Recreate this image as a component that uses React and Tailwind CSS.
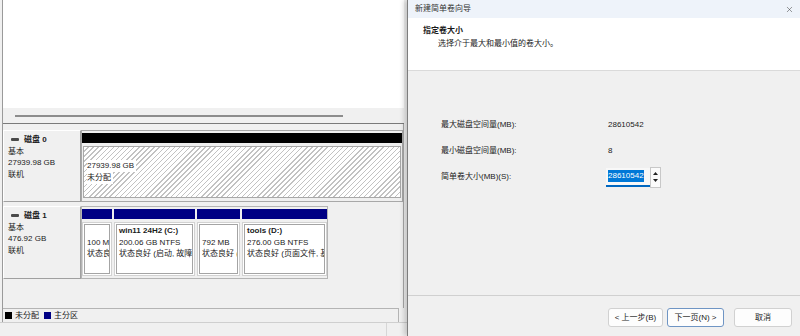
import React from "react";
import { X } from "lucide-react";

// disk label on the left of each row
function DiskLabel({ name, size }) {
  return (
    <div className="w-[78px] flex-none border border-white border-r-[#a0a0a0] border-b-[#a0a0a0] pl-[4px] pt-[3px]">
      <div className="flex items-center">
        <span className="ml-[3px] mr-[5px] w-[8px] h-[3px] bg-[#4a4a4a] rounded-[1px]" />
        <span className="font-bold">{name}</span>
      </div>
      <div>基本</div>
      <div>{size}</div>
      <div>联机</div>
    </div>
  );
}

function Partition({ w, title, size, status }) {
  return (
    <div className={`${w} flex-none flex flex-col gap-[3px]`}>
      <div className="h-[10px] bg-[#000084]" />
      <div className="flex-1 border border-[#d2d2d2] bg-white p-[1px]">
        <div className="h-full border border-[#a4a4a4] pl-[2px] overflow-hidden whitespace-nowrap">
          <div className="font-bold">{title || "\u00a0"}</div>
          <div>{size}</div>
          <div>{status}</div>
        </div>
      </div>
    </div>
  );
}

const Spin = () => (
  <div className="w-[11px] h-[21px] border border-[#c8c8c8] bg-[#fbfbfb] flex flex-col items-center justify-around py-[2px]">
    <svg width="5" height="3" viewBox="0 0 5 3"><polygon points="2.5,0 5,3 0,3" fill="#222" /></svg>
    <svg width="5" height="3" viewBox="0 0 5 3"><polygon points="0,0 5,0 2.5,3" fill="#222" /></svg>
  </div>
);

export default function App() {
  return (
    <div className="w-[800px] h-[336px] flex overflow-hidden bg-[#f0f0f0] text-[8px] leading-[11.7px] text-[#1b1b1b] font-['Liberation_Sans','Noto_Sans_CJK_SC',sans-serif]">
      {/* disk management window */}
      <div className="w-[407px] flex-none h-full flex flex-col">
        <div className="flex-1 flex flex-col ml-[2px] mr-[3px] border-l border-[#9a9a9a]">
          <div className="h-[108px] bg-white" />
          <div className="h-[16px] flex-none border-b border-[#7a7a7a] flex items-center pl-[12px]">
            <div className="w-[328px] h-[2px] bg-[#8c8c8c]" />
          </div>
          <div className="flex-1 border-r border-[#a8a8a8] pt-[6px] flex flex-col gap-[4px]">
            {/* disk 0 */}
            <div className="flex h-[72px]">
              <DiskLabel name="磁盘 0" size="27939.98 GB" />
              <div className="flex-1 border border-[#a8a8a8] pt-[2px] pb-[3px] flex flex-col gap-[3px]">
                <div className="h-[10px] bg-black" />
                <div className="flex-1 mx-[1px] border border-[#a8a8a8] bg-[image:repeating-linear-gradient(135deg,#ffffff_0px,#ffffff_2.6px,#c2c2c2_2.6px,#c2c2c2_3.6px)] flex flex-col justify-center items-start pl-[3px]">
                  <span className="bg-white pr-[2px]">27939.98 GB</span>
                  <span className="bg-white pr-[2px]">未分配</span>
                </div>
              </div>
            </div>
            {/* disk 1 */}
            <div className="flex h-[73px]">
              <DiskLabel name="磁盘 1" size="476.92 GB" />
              <div className="w-[247px] flex-none border border-[#b4b4b4] flex gap-[2px] pt-[2px] pb-[2px]">
                <Partition w="w-[30px]" size="100 MB" status="状态良好 (EFI 系统分区)" />
                <Partition w="w-[81px]" title="win11 24H2  (C:)" size="200.06 GB NTFS" status="状态良好 (启动, 故障转储, 基本数据分区)" />
                <Partition w="w-[43px]" size="792 MB" status="状态良好 (恢复分区)" />
                <Partition w="w-[85px]" title="tools  (D:)" size="276.00 GB NTFS" status="状态良好 (页面文件, 基本数据分区)" />
              </div>
            </div>
          </div>
          <div className="h-[14px] flex-none mr-[5px] border-t border-r border-[#b4b4b4] flex items-center pl-[2px]">
            <span className="w-[7px] h-[7px] bg-black" />
            <span className="ml-[3px]">未分配</span>
            <span className="ml-[5px] w-[7px] h-[7px] bg-[#000084]" />
            <span className="ml-[3px]">主分区</span>
          </div>
        </div>
        <div className="h-[14px] flex-none border-t border-[#cfcfcf] flex">
          <div className="w-[387px] border-r border-[#d6d6d6]" />
        </div>
      </div>

      {/* wizard dialog */}
      <div className="flex-1 flex flex-col border-l border-[#7d7d7d] shadow-[-3px_0_5px_rgba(0,0,0,0.18)] relative">
        <div className="h-[18px] flex-none bg-[#eef3fa] flex items-center justify-between pl-[7px] pr-[6px] text-[#333]">
          <span>新建简单卷向导</span>
          <X size={9} strokeWidth={1.3} color="#333" />
        </div>
        <div className="h-[53px] flex-none bg-white border-b border-[#dadada] pl-[15px] pt-[7px]">
          <div className="font-bold">指定卷大小</div>
          <div className="ml-[15px] mt-[1px]">选择介于最大和最小值的卷大小。</div>
        </div>
        <div className="flex-1 pl-[33px] pt-[41px]">
          <div className="grid grid-cols-[167px_auto] auto-rows-[26px] items-center">
            <span>最大磁盘空间量(MB):</span>
            <span>28610542</span>
            <span>最小磁盘空间量(MB):</span>
            <span>8</span>
            <span>简单卷大小(MB)(S):</span>
            <div className="flex items-center ml-[-2px]">
              <div className="w-[44px] h-[19px] bg-[#f8f8f8] border-b-2 border-[#0067c0] flex items-center pl-[2px]">
                <span className="bg-[#0078d7] text-white">28610542</span>
              </div>
              <Spin />
            </div>
          </div>
        </div>
        <div className="h-[41px] flex-none border-t border-[#d0d0d0] flex justify-end pr-[8px] pt-[12px]">
          <button className="w-[55px] h-[19px] rounded-[3px] border border-[#d1d1d1] bg-[#fdfdfd] flex items-center justify-center">&lt; 上一步(B)</button>
          <button className="ml-[4px] w-[57px] h-[19px] rounded-[3px] border border-[#6f95c4] bg-[#fdfdfd] flex items-center justify-center">下一页(N) &gt;</button>
          <button className="ml-[10px] w-[58px] h-[19px] rounded-[3px] border border-[#d1d1d1] bg-[#fdfdfd] flex items-center justify-center">取消</button>
        </div>
      </div>
    </div>
  );
}
